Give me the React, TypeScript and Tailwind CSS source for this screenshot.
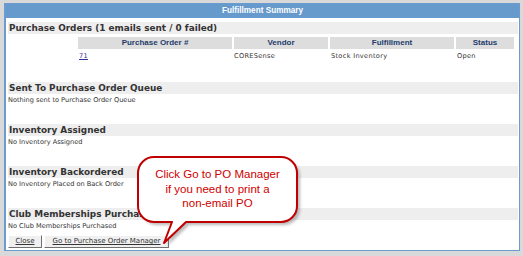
import React from "react";

const verdana = { fontFamily: "Verdana, 'DejaVu Sans', sans-serif" };
const arial = { fontFamily: "Arial, 'Liberation Sans', sans-serif" };

function Section({ title, text }: { title: string; text: string }) {
  return (
    <div className="mb-[18px]">
      <div
        className="h-[12px] bg-[#eeeeee] pl-[1px] text-[8.9px] font-bold leading-[12px] text-[#333333]"
        style={verdana}
      >
        {title}
      </div>
      <div className="h-[12px] text-[6.6px] leading-[12px] text-[#333333]" style={verdana}>
        {text}
      </div>
    </div>
  );
}

export default function App() {
  return (
    <div className="relative h-[256px] w-[523px] overflow-hidden bg-[#d9d9d9]">
      <div className="ml-[4px] mt-[3px] h-[248px] w-[516px] border border-l-2 border-[#6c9bd0] bg-white">
        <div
          className="flex h-[14px] items-center justify-center bg-[#6699cc] text-[8.2px] font-bold text-white"
          style={arial}
        >
          Fulfillment Summary
        </div>
        <div className="pl-[2px] pr-[1px] pt-[4px]">
          <div
            className="h-[12px] bg-[#eeeeee] pl-[1px] text-[8.9px] font-bold leading-[12px] text-[#333333]"
            style={verdana}
          >
            Purchase Orders (1 emails sent / 0 failed)
          </div>
          <div className="mt-[3px] flex gap-[2px]" style={arial}>
            <div className="w-[68px]" />
            <div className="h-[12px] w-[154px] bg-[#dddddd] text-center text-[8px] font-bold leading-[12px] text-[#1d3c6c]">
              Purchase Order #
            </div>
            <div className="h-[12px] w-[94px] bg-[#dddddd] text-center text-[8px] font-bold leading-[12px] text-[#1d3c6c]">
              Vendor
            </div>
            <div className="h-[12px] w-[124px] bg-[#dddddd] text-center text-[8px] font-bold leading-[12px] text-[#1d3c6c]">
              Fulfillment
            </div>
            <div className="h-[12px] w-[58px] bg-[#dddddd] text-center text-[8px] font-bold leading-[12px] text-[#1d3c6c]">
              Status
            </div>
          </div>
          <div
            className="mt-[1px] flex h-[12px] gap-[2px] text-[6.6px] leading-[12px] tracking-[0.3px] text-[#333333]"
            style={verdana}
          >
            <div className="w-[68px]" />
            <div className="w-[154px] pl-[1px]">
              <span className="text-[#333399] underline">71</span>
            </div>
            <div className="w-[94px]">CORESense</div>
            <div className="w-[124px] pl-[1px]">Stock Inventory</div>
            <div className="w-[58px] pl-[1px]">Open</div>
          </div>
          <div className="h-[20px]" />
          <Section title="Sent To Purchase Order Queue" text="Nothing sent to Purchase Order Queue" />
          <Section title="Inventory Assigned" text="No Inventory Assigned" />
          <Section title="Inventory Backordered" text="No Inventory Placed on Back Order" />
          <div>
            <div
              className="h-[12px] bg-[#eeeeee] pl-[1px] text-[8.9px] font-bold leading-[12px] text-[#333333]"
              style={verdana}
            >
              Club Memberships Purchased
            </div>
            <div className="h-[12px] text-[6.6px] leading-[12px] text-[#333333]" style={verdana}>
              No Club Memberships Purchased
            </div>
          </div>
          <div className="mt-[3px] flex gap-[2px] text-[7px] text-[#333333]" style={verdana}>
            <div className="flex h-[13px] w-[34px] items-center justify-center border border-b-[#707070] border-l-white border-r-[#707070] border-t-white bg-[#f0f0f0] underline">
              Close
            </div>
            <div className="flex h-[13px] w-[125px] items-center justify-center border border-b-[#707070] border-l-white border-r-[#707070] border-t-white bg-[#f0f0f0] underline">
              Go to Purchase Order Manager
            </div>
          </div>
        </div>
      </div>

      <svg
        className="absolute left-[130px] top-[150px]"
        width="180"
        height="100"
        viewBox="0 0 180 100"
      >
        <defs>
          <filter id="blur" x="-20%" y="-20%" width="140%" height="140%">
            <feGaussianBlur stdDeviation="1.5" />
          </filter>
        </defs>
        <path
          d="M 24 7 H 151 A 16 16 0 0 1 167 23 V 56 A 16 16 0 0 1 151 72 H 56 L 34 93 L 42 72 H 24 A 16 16 0 0 1 8 56 V 23 A 16 16 0 0 1 24 7 Z"
          fill="#808080"
          opacity="0.55"
          transform="translate(3 3)"
          filter="url(#blur)"
        />
        <path
          d="M 24 7 H 151 A 16 16 0 0 1 167 23 V 56 A 16 16 0 0 1 151 72 H 56 L 34 93 L 42 72 H 24 A 16 16 0 0 1 8 56 V 23 A 16 16 0 0 1 24 7 Z"
          fill="white"
          stroke="#c00000"
          strokeWidth="2"
          strokeLinejoin="round"
        />
      </svg>
      <div
        className="absolute left-[138px] top-[167px] w-[159px] text-center text-[11.5px] leading-[14.5px] text-[#d00000]"
        style={arial}
      >
        Click Go to PO Manager
        <br />
        if you need to print a
        <br />
        non-email PO
      </div>
    </div>
  );
}
